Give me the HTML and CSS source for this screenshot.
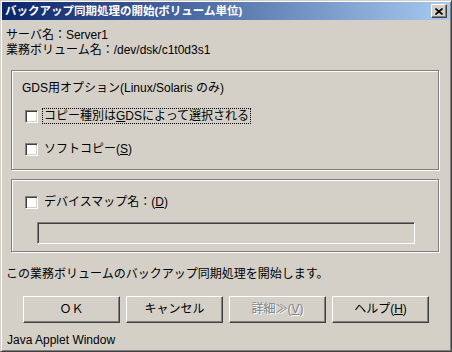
FILE: index.html
```html
<!DOCTYPE html>
<html lang="ja">
<head>
<meta charset="utf-8">
<title>バックアップ同期処理の開始(ボリューム単位)</title>
<link rel="stylesheet" href="styles.css">
</head>
<body>
<div class="win">
    <div class="win-title">
        <span class="win-caption">バックアップ同期処理の開始(ボリューム単位)</span>
        <span class="win-close"><svg width="8" height="7" viewBox="0 0 8 7"><path d="M0.5 0.5 L7.5 6.5 M7.5 0.5 L0.5 6.5" stroke="#000" stroke-width="1.6" fill="none"/></svg></span>
    </div>
    <div class="win-body">
        <div class="info">
            <div>サーバ名：Server1</div>
            <div>業務ボリューム名：/dev/dsk/c1t0d3s1</div>
        </div>
        <div class="group group-gds">
            <div class="group-label">GDS用オプション(Linux/Solaris のみ)</div>
            <div class="check"><span class="box"></span><span class="check-text focus">コピー種別は<u>G</u>DSによって選択される</span></div>
            <div class="check check-2"><span class="box"></span><span class="check-text">ソフトコピー(<u>S</u>)</span></div>
        </div>
        <div class="group group-map">
            <div class="check"><span class="box"></span><span class="check-text">デバイスマップ名：(<u>D</u>)</span></div>
            <div class="field"></div>
        </div>
        <p class="message">この業務ボリュームのバックアップ同期処理を開始します。</p>
        <div class="buttons">
            <span class="btn">ＯＫ</span>
            <span class="btn">キャンセル</span>
            <span class="btn btn-off">詳細≫(<u>V</u>)</span>
            <span class="btn">ヘルプ(<u>H</u>)</span>
        </div>
        <div class="status">Java Applet Window</div>
    </div>
</div>
</body>
</html>
```

FILE: styles.css
```css
html,body,p{ margin:0; padding:0;}
body{ background:#d4d0c8; font-family:"Liberation Sans","Noto Sans CJK JP",sans-serif; font-size:12px; color:#000;}
u{ text-decoration:underline; text-underline-offset:1px;}

.win{ box-sizing:border-box; width:452px; height:352px; padding:1px; background:#d4d0c8; border:1px solid; border-color:#d4d0c8 #404040 #404040 #d4d0c8; box-shadow:inset 1px 1px #fff, inset -1px -1px #808080;}
.win-title{ display:flex; align-items:center; justify-content:space-between; height:18px; padding:0 3px 0 3px; background:linear-gradient(to right,#0a246a,#a6caf0);}
.win-caption{ color:#fff; font-weight:bold; font-size:11.5px; line-height:18px; white-space:nowrap;}
.win-close{ box-sizing:border-box; display:flex; align-items:center; justify-content:center; width:16px; height:14px; background:#d4d0c8; border:1px solid; border-color:#fff #404040 #404040 #fff; box-shadow:inset -1px -1px #808080;}

.win-body{ padding:8px 0 0 4px; line-height:15px;}

.group{ box-sizing:border-box; width:428px; margin-left:5px; border:1px solid #808080; box-shadow:inset 1px 1px #fff, 1px 1px #fff;}
.group-gds{ margin-top:12px; padding:10px 0 12px 0;}
.group-label{ padding-left:10px;}
.group-map{ margin-top:9px; padding:14px 0 7px 0;}

.check{ display:flex; align-items:center; height:16px; margin-top:12px; padding-left:13px;}
.check-2{ margin-top:17px;}
.group-map .check{ margin-top:0;}
.box{ box-sizing:border-box; width:13px; height:13px; margin-right:4px; background:#fff; border:1px solid; border-color:#808080 #fff #fff #808080; box-shadow:inset 1px 1px #404040, inset -1px -1px #d4d0c8;}
.check-text{ padding:0 1px; border:1px solid transparent; line-height:14px; white-space:nowrap;}
.focus{ border:1px dotted #000;}

.field{ box-sizing:border-box; width:378px; height:22px; margin:12px 0 0 25px; background:#d4d0c8; border:1px solid; border-color:#808080 #fff #fff #808080; box-shadow:inset 1px 1px #404040, inset -1px -1px #d4d0c8;}

.message{ margin-top:15px;}

.buttons{ display:flex; gap:6px; margin-top:14px; padding-left:17px;}
.btn{ box-sizing:border-box; display:flex; align-items:center; justify-content:center; width:97px; height:27px; border:1px solid; border-color:#fff #404040 #404040 #fff; box-shadow:inset -1px -1px #808080; white-space:nowrap;}
.btn-off{ color:#808080; text-shadow:1px 1px #fff;}

.status{ margin-top:10px; padding-left:1px;}
```
